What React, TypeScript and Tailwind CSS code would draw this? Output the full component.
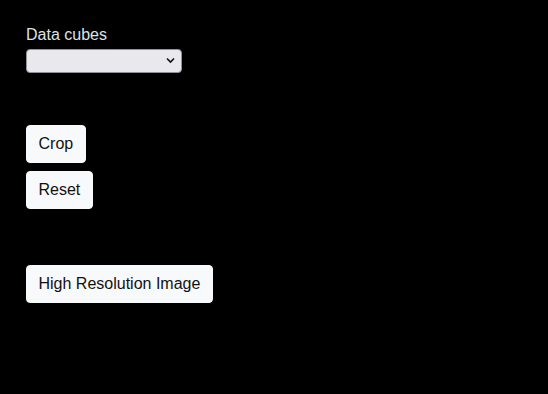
export default function App() {
  return (
    <div className="min-h-screen bg-black pl-[26px] pt-[23px] font-['Liberation_Sans',Arial,sans-serif] text-base leading-6">
      <label className="block text-[#dee2e6]">Data cubes</label>
      <div className="relative mt-[2px] h-6 w-[156px]">
        <select className="h-6 w-full appearance-none rounded-[4px] border border-[#8f8f9d] bg-[#e9e9ed] text-sm text-black" />
        <svg
          className="pointer-events-none absolute right-[7px] top-[8px]"
          width="9"
          height="7"
          viewBox="0 0 9 7"
          fill="none"
        >
          <path d="M1 1.5 4.5 5 8 1.5" stroke="#111" strokeWidth="1.6" />
        </svg>
      </div>
      <div className="mt-[52px] flex flex-col items-start gap-2">
        <Btn>Crop</Btn>
        <Btn>Reset</Btn>
      </div>
      <div className="mt-[56px]">
        <Btn>High Resolution Image</Btn>
      </div>
    </div>
  );
}

function Btn({ children }: { children: React.ReactNode }) {
  return (
    <button className="rounded border border-[#f8f9fa] bg-[#f8f9fa] px-[11.5px] py-1.5 text-base leading-6 text-[#111]">
      {children}
    </button>
  );
}
